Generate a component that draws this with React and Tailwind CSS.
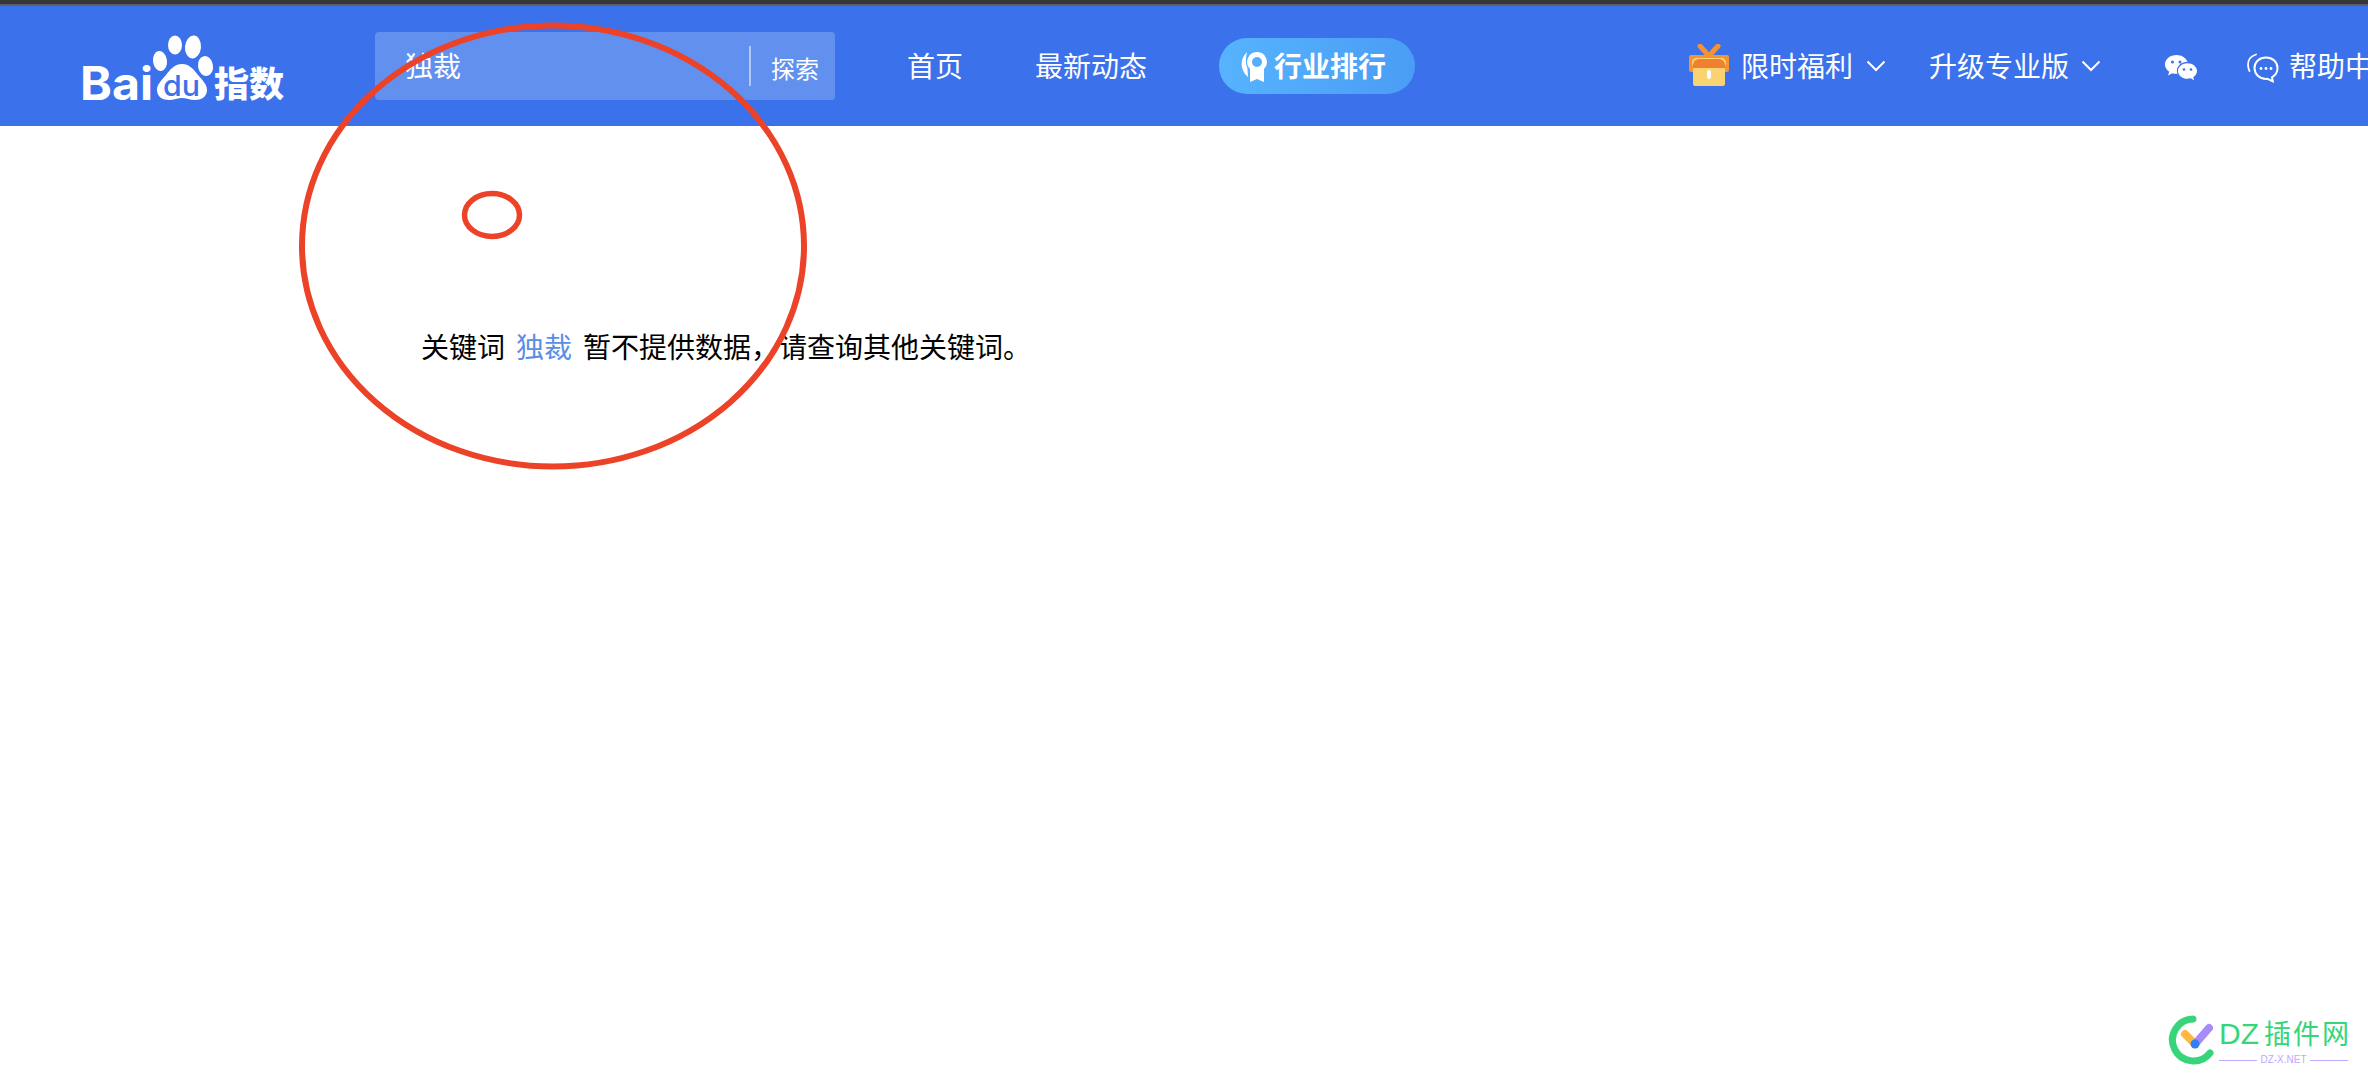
const cjk = { fontFamily: '"Noto Sans CJK SC", "Noto Sans", sans-serif' }

function Logo() {
  return (
    <svg width="204" height="72" viewBox="0 0 204 72" className="shrink-0 overflow-visible">
      <g fill="#fff">
        <text x="-2" y="70" fontFamily="Inter, 'Liberation Sans', sans-serif" fontWeight="700" fontSize="46" textLength="73" lengthAdjust="spacingAndGlyphs">Bai</text>
        <ellipse cx="93" cy="15" rx="7" ry="9.500" />
        <ellipse cx="111" cy="17" rx="8" ry="11.500" transform="rotate(5 111 17)" />
        <ellipse cx="78" cy="31" rx="7" ry="10" transform="rotate(-8 78 31)" />
        <ellipse cx="123.500" cy="36" rx="7.500" ry="10" transform="rotate(-10 123.500 36)" />
        <path d="M100 34c8 0 12 6 16 11 4 5 9 9 9 15 0 7-6 10-12 10-5 0-9-2-13-2s-8 2-13 2c-6 0-12-3-12-10 0-6 5-10 9-15 4-5 8-11 16-11Z" />
      </g>
      <text x="81" y="66" fill="#3b71eb" fontFamily="Inter, 'Liberation Sans', sans-serif" fontWeight="500" fontSize="29" textLength="37" lengthAdjust="spacingAndGlyphs">du</text>
      <text x="132" y="67" fill="#fff" fontFamily='"Noto Sans CJK SC", sans-serif' fontWeight="900" fontSize="35" textLength="70" lengthAdjust="spacingAndGlyphs">指数</text>
    </svg>
  )
}

function AwardIcon() {
  return (
    <svg width="26" height="34" viewBox="0 0 26 34" className="shrink-0">
      <path d="M6 3C1 8-.5 14 1.500 20c1 3 3 6 5.500 8l-.6-9C4.500 15 4.500 9 6 3Z" fill="#fff" />
      <path fillRule="evenodd" d="M16 3a10 10 0 0 1 7 17v13l-7-3-7 3V20A10 10 0 0 1 16 3Zm0 5a5 5 0 1 0 0 10 5 5 0 0 0 0-10Z" fill="#fff" />
    </svg>
  )
}

function GiftIcon() {
  return (
    <svg width="40" height="42" viewBox="0 0 40 42" className="shrink-0">
      <path d="M11 2l9 10 9-10" fill="none" stroke="#f59233" strokeWidth="5" strokeLinecap="round" />
      <rect x="0" y="11" width="40" height="17" rx="2" fill="#f59233" />
      <path d="M4 22a5 5 0 0 1 5-8h22a5 5 0 0 1 5 8v18a2 2 0 0 1-2 2H6a2 2 0 0 1-2-2Z" fill="#f9d272" />
      <path d="M4 21a6 6 0 0 1 6-6h20a6 6 0 0 1 6 6v3H4Z" fill="#f07f2e" />
      <rect x="18" y="26" width="4" height="9" rx="2" fill="#fff" />
    </svg>
  )
}

function Chevron() {
  return (
    <svg width="20" height="12" viewBox="0 0 20 12" className="shrink-0">
      <path d="M1.500 1.500L10 10l8.500-8.500" fill="none" stroke="#fff" strokeWidth="2" />
    </svg>
  )
}

function WechatIcon() {
  return (
    <svg width="32" height="27" viewBox="0 0 32 27" className="shrink-0">
      <path d="M11.500 0C5 0 0 4.200 0 9.500c0 3 1.600 5.500 4.200 7.300L3 20.500l4.400-2.300c1.300.4 2.600.6 4.100.6l1 0c-.4-1-.6-2-.6-3.100 0-5 4.800-8.900 10.600-8.900C21 2.800 16.700 0 11.500 0Z" fill="#fff" />
      <path d="M32 16c0-4.400-4.300-7.800-9.500-7.800S13 11.600 13 16s4.300 7.800 9.500 7.800c1.100 0 2.200-.2 3.200-.5l3.500 2-1-3.100C30.400 20.700 32 18.500 32 16Z" fill="#fff" />
      <circle cx="7.500" cy="7" r="1.500" fill="#3b71eb" />
      <circle cx="15" cy="7" r="1.500" fill="#3b71eb" />
      <circle cx="19" cy="14.500" r="1.300" fill="#3b71eb" />
      <circle cx="26" cy="14.500" r="1.300" fill="#3b71eb" />
    </svg>
  )
}

function HelpIcon() {
  return (
    <svg width="32" height="30" viewBox="0 0 32 30" className="shrink-0">
      <path d="M9 1.500C4 3 1 7 1 12c0 2 .5 4 1.500 6" fill="none" stroke="#fff" strokeWidth="1.800" strokeLinecap="round" />
      <path d="M19 4.500c6.600 0 11.500 4.500 11.500 10.500 0 4-2.200 7.400-5.500 9.300l.8 4-5.300-2.500c-.5.100-1 .1-1.500.1-6.600 0-11.500-4.900-11.500-10.900S12.400 4.500 19 4.500Z" fill="none" stroke="#fff" strokeWidth="2" />
      <circle cx="14" cy="15.500" r="1.400" fill="#fff" />
      <circle cx="19" cy="15.500" r="1.400" fill="#fff" />
      <circle cx="24" cy="15.500" r="1.400" fill="#fff" />
    </svg>
  )
}

function Header() {
  return (
    <header className="flex h-[120px] items-center overflow-hidden whitespace-nowrap bg-[#3b71eb] pl-[82px] text-[28px] font-normal leading-none text-white">
      <Logo />
      <div className="ml-[89px] flex h-[68px] w-[460px] shrink-0 items-center rounded bg-[#6190ef]">
        <span className="ml-[30px] mt-[-2px] w-[344px]">独裁</span>
        <div className="h-10 w-0.5 bg-white/50" />
        <span className="ml-5 mt-1 text-2xl">探索</span>
      </div>
      <span className="ml-[72px] mt-[-2px]">首页</span>
      <span className="ml-[72px] mt-[-2px]">最新动态</span>
      <div className="ml-[72px] flex h-14 w-[196px] shrink-0 items-center rounded-full bg-linear-to-r from-[#57b3fe] to-[#4a9df5] pl-[22px]">
        <AwardIcon />
        <span className="ml-[7px] mt-[-2px] font-bold">行业排行</span>
      </div>
      <div className="ml-[274px] mt-[-2px]">
        <GiftIcon />
      </div>
      <span className="ml-3 mt-[-2px]">限时福利</span>
      <span className="ml-[13px]">
        <Chevron />
      </span>
      <span className="ml-[43px] mt-[-2px]">升级专业版</span>
      <span className="ml-3">
        <Chevron />
      </span>
      <div className="ml-16 mt-1">
        <WechatIcon />
      </div>
      <div className="ml-[50px] mt-[3px]">
        <HelpIcon />
      </div>
      <span className="ml-2.5 mt-[-2px]">帮助中心</span>
    </header>
  )
}

// 红色圈注，盖在页面内容上
function Annotations() {
  return (
    <svg width="2368" height="1080" viewBox="0 0 2368 1080" className="pointer-events-none absolute inset-0">
      <ellipse cx="553" cy="246" rx="251" ry="220.500" fill="none" stroke="#ec4228" strokeWidth="6" />
      <ellipse cx="492" cy="215" rx="27.500" ry="21.500" fill="none" stroke="#ec4228" strokeWidth="5.500" />
    </svg>
  )
}

function Watermark() {
  return (
    <div className="absolute left-[2168px] top-[1015px] flex items-start gap-[5px]">
      <svg width="46" height="50" viewBox="0 0 46 50" className="shrink-0">
        <path d="M25 4a21 21 0 1 0 17 34" fill="none" stroke="#36d57a" strokeWidth="7" strokeLinecap="round" />
        <path d="M17 19l10 10" stroke="#fdb844" strokeWidth="8" strokeLinecap="round" />
        <path d="M28 28l13-15" stroke="#a78bfa" strokeWidth="8" strokeLinecap="round" />
        <circle cx="27" cy="29" r="4.500" fill="#2f80f7" />
      </svg>
      <div className="mt-[1px] w-[129px]">
        <div className="whitespace-nowrap text-[27px] leading-8 tracking-[2px] text-[#36d57a]" style={cjk}>
          <span className="font-['Liberation_Sans'] text-3xl tracking-normal">DZ</span>
          <span className="ml-[5px]">插件网</span>
        </div>
        <div className="mt-[2px] flex items-center gap-[3px]">
          <div className="h-px flex-1 bg-[#c0a8ff]" />
          <span className="font-['Liberation_Sans'] text-[10px] leading-3 text-[#c0a8ff]">DZ-X.NET</span>
          <div className="h-px flex-1 bg-[#c0a8ff]" />
        </div>
      </div>
    </div>
  )
}

export default function App() {
  return (
    <div className="relative h-[1080px] w-[2368px] overflow-hidden bg-white" style={cjk}>
      <div className="h-1 bg-[#36373b]" />
      <div className="h-0.5 bg-[#5d5f66]" />
      <Header />
      <main className="pl-[421px] pt-[202px] text-[28px] leading-9 text-black">
        关键词<span className="mx-[11px] text-[#5a8ee6]">独裁</span>暂不提供数据，请查询其他关键词。
      </main>
      <Annotations />
      <Watermark />
    </div>
  )
}
